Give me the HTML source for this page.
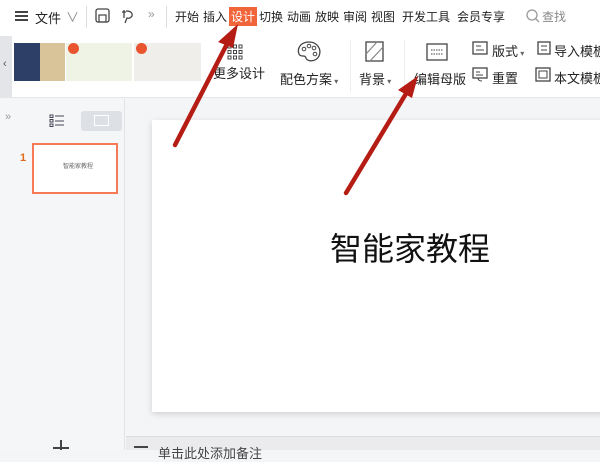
<!DOCTYPE html>
<html><head><meta charset="utf-8"><style>
*{margin:0;padding:0;box-sizing:border-box}
body{width:600px;height:450px;overflow:hidden;background:#f4f5f7;font-family:"Liberation Sans","Noto Sans CJK SC",sans-serif;position:relative;color:#222}
.a{position:absolute}
.t{font-size:13px;white-space:nowrap}
.m{position:absolute;top:8px;font-size:12px;white-space:nowrap}
</style></head><body>
<!-- top bar -->
<div class="a" style="left:0;top:0;width:600px;height:34px;background:#fff"></div>
<div class="a" style="left:15px;top:11px;width:13px;height:1.5px;background:#444;box-shadow:0 4px 0 #444,0 8px 0 #444"></div>
<div class="a t" style="left:35px;top:8px">文件</div>
<div class="a t" style="left:66px;top:7px;color:#888">∨</div>
<div class="a" style="left:86px;top:6px;width:1px;height:22px;background:#ddd"></div>
<svg class="a" style="left:95px;top:8px" width="16" height="16"><rect x="1" y="1" width="13" height="13" rx="2" fill="none" stroke="#444" stroke-width="1.3"/><rect x="4" y="7" width="7" height="7" fill="none" stroke="#444" stroke-width="1.2"/></svg>
<svg class="a" style="left:120px;top:8px" width="16" height="16"><path d="M2 4 L6 4 M4 2 V10 M6 3 Q13 3 12 8 Q10 11 7 10 L5 15" fill="none" stroke="#444" stroke-width="1.3"/></svg>
<div class="a t" style="left:148px;top:7px;color:#999;font-size:12px">»</div>
<div class="a" style="left:166px;top:6px;width:1px;height:22px;background:#ddd"></div>
<div class="m" style="left:175px">开始</div>
<div class="m" style="left:203px">插入</div>
<div class="m" style="left:229px;top:7px;background:#f0653a;color:#fff;padding:1px 2px">设计</div>
<div class="m" style="left:259px">切换</div>
<div class="m" style="left:287px">动画</div>
<div class="m" style="left:315px">放映</div>
<div class="m" style="left:343px">审阅</div>
<div class="m" style="left:371px">视图</div>
<div class="m" style="left:402px">开发工具</div>
<div class="m" style="left:457px">会员专享</div>
<svg class="a" style="left:525px;top:8px" width="15" height="15"><circle cx="7" cy="7" r="5" fill="none" stroke="#999" stroke-width="1.3"/><path d="M10.5 10.5 L14 14" stroke="#999" stroke-width="1.3"/></svg>
<div class="m" style="left:542px;color:#888">查找</div>
<!-- ribbon -->
<div class="a" style="left:0;top:34px;width:600px;height:64px;background:#fff;border-bottom:1px solid #e6e6e6"></div>
<div class="a" style="left:0;top:36px;width:12px;height:61px;background:#e3e5e9"></div>
<div class="a t" style="left:3px;top:58px;font-size:11px;color:#555">‹</div>
<div class="a" style="left:14px;top:43px;width:51px;height:38px;background:#2d3f66"></div>
<div class="a" style="left:40px;top:43px;width:25px;height:38px;background:#d9c49a"></div>
<div class="a" style="left:66px;top:43px;width:66px;height:38px;background:#eef3e6"></div>
<div class="a" style="left:134px;top:43px;width:67px;height:38px;background:#f0eeea"></div>
<div class="a" style="left:68px;top:43px;width:11px;height:11px;border-radius:50%;background:#e8552f"></div>
<div class="a" style="left:136px;top:43px;width:11px;height:11px;border-radius:50%;background:#e8552f"></div>
<svg class="a" style="left:227px;top:44px" width="16" height="16"><g fill="none" stroke="#444"><rect x="1" y="1" width="3" height="3"/><rect x="6.5" y="1" width="3" height="3"/><rect x="12" y="1" width="3" height="3"/><rect x="1" y="6.5" width="3" height="3"/><rect x="6.5" y="6.5" width="3" height="3"/><rect x="12" y="6.5" width="3" height="3"/><rect x="1" y="12" width="3" height="3"/><rect x="6.5" y="12" width="3" height="3"/><rect x="12" y="12" width="3" height="3"/></g></svg>
<div class="a t" style="left:213px;top:63px">更多设计</div>
<svg class="a" style="left:296px;top:40px" width="26" height="24"><path d="M13 2 C4 2 1 9 3 14 C5 18 9 14 10 18 C11 22 20 22 23 16 C26 9 21 2 13 2 Z" fill="none" stroke="#444" stroke-width="1.3"/><circle cx="8" cy="9" r="1.8" fill="none" stroke="#444"/><circle cx="13" cy="6" r="1.8" fill="none" stroke="#444"/><circle cx="18" cy="8" r="1.8" fill="none" stroke="#444"/><circle cx="19" cy="14" r="1.8" fill="none" stroke="#444"/></svg>
<div class="a t" style="left:280px;top:69px">配色方案<span style="font-size:8px;color:#666"> ▾</span></div>
<div class="a" style="left:350px;top:40px;width:1px;height:52px;background:#eee"></div>
<svg class="a" style="left:365px;top:41px" width="20" height="22"><rect x="1" y="1" width="17" height="19" fill="none" stroke="#444" stroke-width="1.3"/><path d="M1 13 L12 1 M5 20 L18 6" stroke="#888" stroke-width="1.2"/></svg>
<div class="a t" style="left:359px;top:69px">背景<span style="font-size:8px;color:#666"> ▾</span></div>
<div class="a" style="left:404px;top:40px;width:1px;height:52px;background:#eee"></div>
<svg class="a" style="left:426px;top:43px" width="22" height="18"><rect x="1" y="1" width="20" height="16" fill="none" stroke="#444" stroke-width="1.3"/><path d="M5 7 H17 M5 11 H17" stroke="#444" stroke-dasharray="1.5 1"/></svg>
<div class="a t" style="left:414px;top:69px">编辑母版</div>
<svg class="a" style="left:472px;top:41px" width="16" height="14"><rect x="1" y="1" width="14" height="12" fill="none" stroke="#444" stroke-width="1.3"/><path d="M4 5 H9 M4 9 H12" stroke="#444"/></svg>
<div class="a t" style="left:492px;top:41px">版式<span style="font-size:8px;color:#666"> ▾</span></div>
<svg class="a" style="left:472px;top:67px" width="16" height="15"><rect x="1" y="1" width="14" height="10" fill="none" stroke="#444" stroke-width="1.3"/><path d="M4 5 H8 M4 8 H11" stroke="#444"/><path d="M6 11 Q6 14 10 14" fill="none" stroke="#444"/></svg>
<div class="a t" style="left:492px;top:68px">重置</div>
<svg class="a" style="left:535px;top:41px" width="16" height="14"><rect x="3" y="1" width="12" height="12" fill="none" stroke="#444" stroke-width="1.3"/><path d="M6 5 H12 M6 9 H12" stroke="#444"/></svg>
<div class="a t" style="left:554px;top:41px">导入模板</div>
<svg class="a" style="left:535px;top:67px" width="16" height="15"><rect x="1" y="1" width="14" height="13" fill="none" stroke="#444" stroke-width="1.3"/><rect x="4" y="4" width="8" height="7" fill="none" stroke="#444"/></svg>
<div class="a t" style="left:554px;top:68px">本文模板</div>
<!-- left panel -->
<div class="a" style="left:0;top:99px;width:125px;height:351px;background:#f5f6f8;border-right:1px solid #e2e3e6"></div>
<div class="a" style="left:5px;top:111px;font-size:11px;color:#999">»</div>
<svg class="a" style="left:49px;top:114px" width="16" height="14"><g stroke="#445" fill="none"><rect x="1" y="1" width="3" height="2.5"/><rect x="1" y="5.5" width="3" height="2.5"/><rect x="1" y="10" width="3" height="2.5"/><path d="M6 2 H15 M6 7 H15 M6 11 H15"/></g></svg>
<div class="a" style="left:81px;top:111px;width:41px;height:20px;background:#dde0e5;border-radius:3px"></div>
<div class="a" style="left:94px;top:115px;width:15px;height:11px;border:1px solid #fff"></div>
<div class="a" style="left:20px;top:152px;font-size:11px;font-weight:bold;color:#e06a1a">1</div>
<div class="a" style="left:32px;top:143px;width:86px;height:51px;background:#fff;border:2px solid #f57a55"></div>
<div class="a" style="left:63px;top:161px;font-size:6px;color:#666">智能家教程</div>
<div class="a" style="left:53px;top:447px;width:16px;height:2px;background:#444"></div>
<div class="a" style="left:60px;top:440px;width:2px;height:10px;background:#444"></div>
<!-- slide -->
<div class="a" style="left:152px;top:120px;width:460px;height:292px;background:#fff;box-shadow:0 2px 6px rgba(0,0,0,.15)"></div>
<div class="a" style="left:330px;top:224px;font-size:32px;color:#111">智能家教程</div>
<!-- notes -->
<div class="a" style="left:126px;top:436px;width:474px;height:14px;background:#ebebed;border-top:1px solid #ddd"></div>
<div class="a" style="left:134px;top:446px;width:14px;height:1.5px;background:#444"></div>
<div class="a t" style="left:158px;top:443px;color:#444">单击此处添加备注</div>
<!-- arrows -->
<svg class="a" style="left:0;top:0" width="600" height="450">
<g stroke="#b51c14" stroke-width="4.5" stroke-linecap="round" fill="#b51c14">
<line x1="175" y1="145" x2="228" y2="42"/>
<line x1="346" y1="193" x2="407" y2="92"/>
</g>
<polygon points="238,24 218,42 233,48" fill="#b51c14"/>
<polygon points="418,76 398,90 412,98" fill="#b51c14"/>
</svg>
</body></html>
